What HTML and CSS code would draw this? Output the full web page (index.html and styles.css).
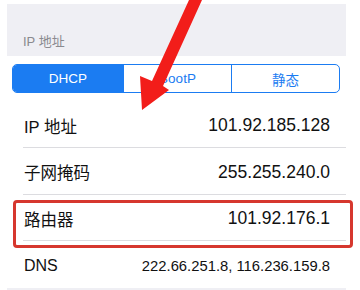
FILE: index.html
```html
<!DOCTYPE html>
<html lang="zh-CN">
<head>
    <meta charset="UTF-8">
    <meta name="viewport" content="width=device-width, initial-scale=1.0">
    <title>IP 地址</title>
    <link rel="stylesheet" href="styles.css">
</head>
<body>
    <div class="screen">
        <div class="section-header"><span>IP 地址</span></div>
        <div class="segmented">
            <div class="seg active">DHCP</div>
            <div class="seg">BootP</div>
            <div class="seg">静态</div>
        </div>
        <ul class="list">
            <li class="row"><span class="label">IP 地址</span><span class="value">101.92.185.128</span></li>
            <li class="row"><span class="label">子网掩码</span><span class="value">255.255.240.0</span></li>
            <li class="row"><span class="label">路由器</span><span class="value">101.92.176.1</span></li>
            <li class="row row-dns"><span class="label">DNS</span><span class="value">222.66.251.8, 116.236.159.8</span></li>
        </ul>
        <div class="section-footer"></div>

        <!-- рамка и стрелка поверх списка -->
        <div class="highlight"></div>
        <svg class="arrow" width="360" height="120" viewBox="0 0 360 120">
            <polygon points="189,0 202,0 163,86 169,90 142,110 140,76 152,81" fill="#f21d1a"/>
        </svg>
    </div>
</body>
</html>
```

FILE: styles.css
```css
:root {
    --bg-group: #efeff4;
    --blue: #1b7cf2;
    --separator: #dcdce0;
    --text-main: #111111;
    --text-muted: #8a8a8f;
    --red-box: #d6372e;
}

* {
    margin: 0;
    padding: 0;
    box-sizing: border-box;
}

body {
    font-family: 'Liberation Sans', 'Noto Sans CJK SC', sans-serif;
    background: #ffffff;
    color: var(--text-main);
}

.screen {
    position: relative;
    margin: 4px 14px 0 7px;
}

.section-header {
    height: 52px;
    background: var(--bg-group);
    display: flex;
    align-items: flex-end;
    padding: 0 0 6px 16px;
    font-size: 13px;
    line-height: 16px;
    color: var(--text-muted);
}

.segmented {
    margin: 8px 6px 0 5px;
    height: 29px;
    border: 1px solid var(--blue);
    border-radius: 5px;
    display: grid;
    grid-template-columns: 110px 1fr 1fr;
    overflow: hidden;
}

.seg {
    display: flex;
    align-items: center;
    justify-content: center;
    font-size: 13.5px;
    color: var(--blue);
}

.seg + .seg {
    border-left: 1px solid var(--blue);
}

.seg.active {
    background: var(--blue);
    color: #ffffff;
}

.list {
    list-style: none;
    margin-top: 8.5px;
}

.row {
    height: 46.5px;
    margin-left: 16px;
    padding: 3px 16px 0 1px;
    display: flex;
    align-items: center;
    justify-content: space-between;
    border-bottom: 1px solid var(--separator);
}

.row:last-child {
    border-bottom: none;
}

.label {
    font-size: 16.5px;
}

.value {
    font-size: 17.5px;
}

.row-dns .label {
    font-size: 16px;
}

.row-dns .value {
    font-size: 14.8px;
}

.section-footer {
    height: 10px;
    background: var(--bg-group);
}

.highlight {
    position: absolute;
    left: 6px;
    top: 196px;
    width: 340px;
    height: 48px;
    border: 3px solid var(--red-box);
    border-radius: 4px;
}

.arrow {
    position: absolute;
    left: -7px;
    top: -4px;
}
```
